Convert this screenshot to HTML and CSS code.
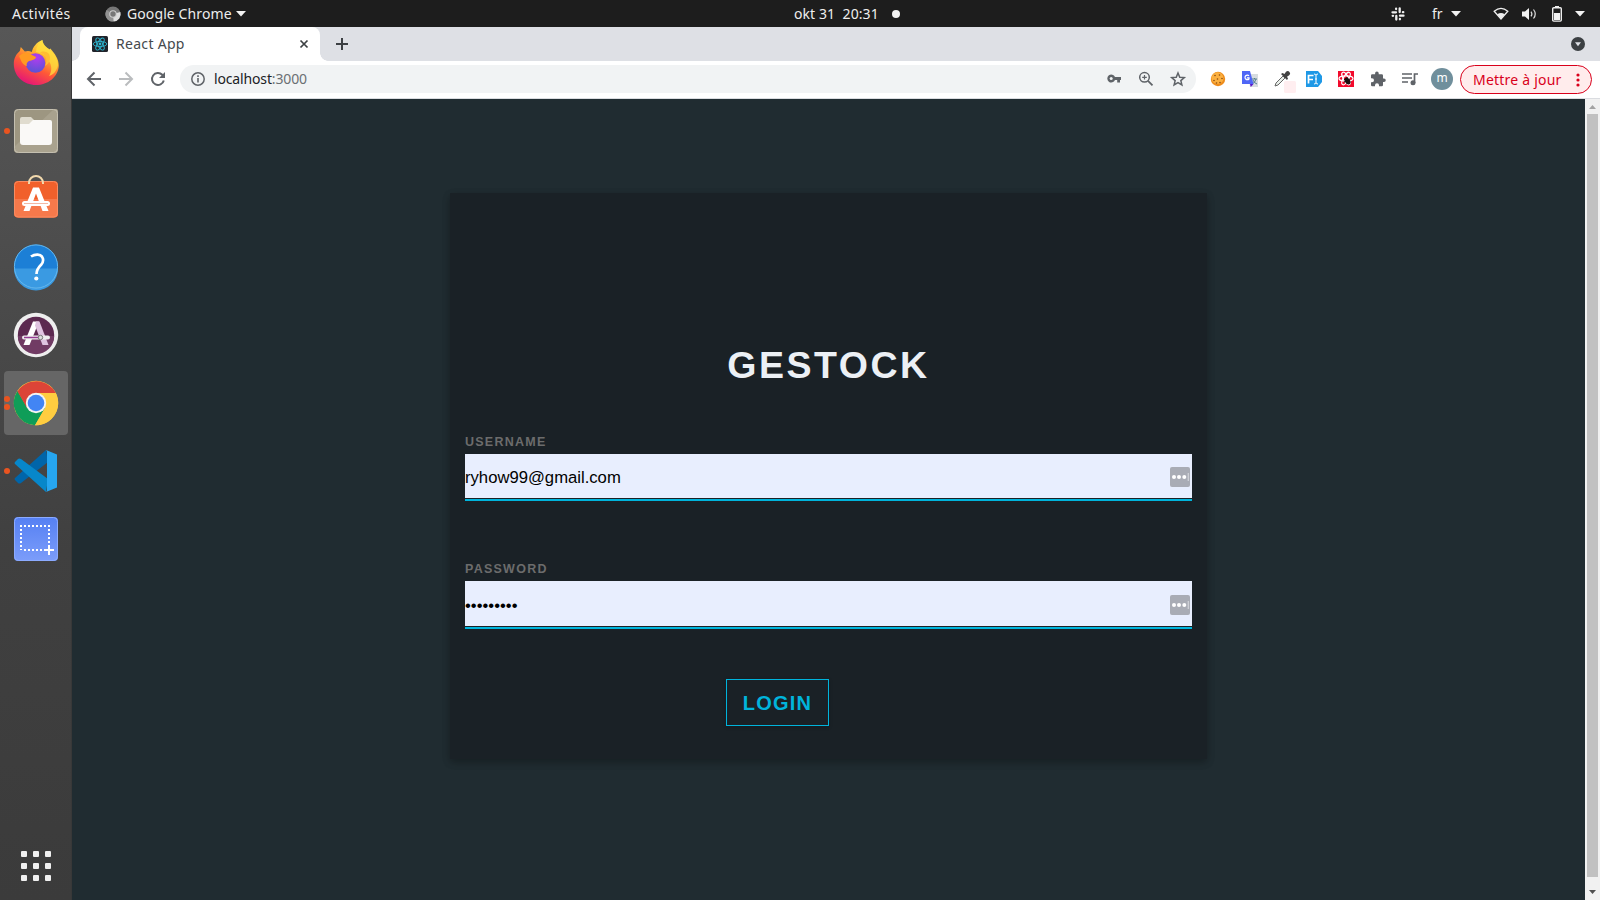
FILE: index.html
```html
<!DOCTYPE html>
<html lang="fr">
<head>
<meta charset="utf-8">
<title>React App</title>
<link rel="stylesheet" href="styles.css">
</head>
<body>
<div class="desktop">
  <header class="topbar">
    <div class="top-left">
      <span class="activities">Activités</span>
      <svg class="mini-chrome" width="16" height="16" viewBox="0 0 16 16"><circle cx="8" cy="8" r="7.6" fill="#777"/><path d="M8 8 15.4 6A7.6 7.6 0 0 1 8.5 15.6z" fill="#ddd"/><path d="M8 8 1.6 4A7.6 7.6 0 0 0 8 15.6z" fill="#929292"/><circle cx="8" cy="8" r="3.8" fill="#ccc"/><circle cx="8" cy="8" r="2.7" fill="#777"/></svg>
      <span class="appname">Google Chrome</span>
      <svg width="10" height="6" viewBox="0 0 10 6"><path d="M0 0h10L5 5.5z" fill="#f2f2f2"/></svg>
    </div>
    <div class="clock"><span class="date">okt 31&nbsp; 20:31</span><i class="dot"></i></div>
    <div class="top-right">
      <svg class="t-slack" width="14" height="14" viewBox="0 0 14 14" stroke="#eee" stroke-width="2.300" stroke-linecap="round" fill="none"><path d="M1.500 5.300H5M5.100 1.700v.4M8.700 1.500V5M12.300 5.200h-.4M9 8.700h3.500M8.900 12.300v-.4M5.300 9v3.500M1.700 8.800h.4"/></svg>
      <span class="lang">fr</span>
      <svg class="t-arr" width="10" height="6" viewBox="0 0 10 6"><path d="M0 0h10L5 5.5z" fill="#f2f2f2"/></svg>
      <svg class="t-wifi" width="16" height="14" viewBox="0 0 16 14"><path d="M1.200 4.300Q8-1.400 14.800 4.300L8 12z" fill="none" stroke="#eee" stroke-width="1.300"/><path d="M4.300 7.200Q8 5 11.700 7.200L8 12z" fill="#eee"/></svg>
      <svg class="t-vol" width="15" height="14" viewBox="0 0 15 14"><path d="M0 4.400h3L7 1v12L3 9.600H0z" fill="#f2f2f2"/><path d="M9 4.600q1.800 2.400 0 4.800M11.500 2.500q3.500 4.500 0 9" fill="none" stroke="#ddd" stroke-width="1.200"/></svg>
      <svg class="t-bat" width="10" height="16" viewBox="0 0 10 16"><path d="M3 0h4v2H3z" fill="#eee"/><rect x=".7" y="1.700" width="8.600" height="13.400" rx="1" fill="none" stroke="#eee" stroke-width="1.400"/><path d="M2 7h6v7H2z" fill="#f2f2f2"/></svg>
      <svg class="t-arr2" width="10" height="6" viewBox="0 0 10 6"><path d="M0 0h10L5 5.500z" fill="#f2f2f2"/></svg>
    </div>
  </header>

  <div class="workspace">
    <nav class="dock">
      <div class="slot">
        <svg width="48" height="48" viewBox="0 0 48 48">
          <defs><linearGradient id="ff" x1=".8" y1="0" x2=".3" y2="1"><stop offset="0" stop-color="#fff44f"/><stop offset=".35" stop-color="#ffb02e"/><stop offset=".62" stop-color="#ff5a36"/><stop offset="1" stop-color="#e3127a"/></linearGradient><radialGradient id="fp" cx=".55" cy=".2" r=".8"><stop offset="0" stop-color="#b53bf0"/><stop offset="1" stop-color="#5b53d4"/></radialGradient></defs>
          <path d="M24 46C11.500 46 1.800 37 1.800 25c0-6 2.500-10 6-13l1-4 4 4.500c3-1 5-.5 7 .5 1-5 5-10 10.500-12 .5 5 4 7 7 9.500l1-1C43 15 46.800 20 46.800 27 46 38 36 46 24 46z" fill="url(#ff)"/>
          <path d="M30.500 1c.5 5 4 7 7 9.500C43 15 46 20 46 26c-1 6-5 10-9 11 3-5 3-10 0-15-2-5-7-8-13-9 .500-5 2.500-9.500 6.500-12z" fill="#ffdf3f" opacity=".75"/>
          <circle cx="23.500" cy="24" r="9.800" fill="url(#fp)"/>
          <path d="M7 17c5-4 9-4 13-1l4 2c-.5 3-4 3-7 4-2 1-3 3-2 5-5-1-6-6-8-10z" fill="#ff9a22"/>
          <path d="M28 14c6 1 8 7 5 13 5-3 6-8 4-12-3-3-7-3-9-1z" fill="#ffbd32"/>
        </svg>
      </div>
      <div class="slot"><i class="run"></i>
        <svg width="48" height="48" viewBox="0 0 48 48"><rect x="2" y="2" width="44" height="44" rx="4" fill="#9d9681"/><path d="M2 40 42 2h2q2 0 2 3v37q0 4-4 4H6q-4 0-4-4z" fill="#a9a28e"/><rect x="2.500" y="2.500" width="43" height="43" rx="4" fill="none" stroke="#c4bfb0"/><path d="M8 20v-8q0-2 2-2h9l3 3v7z" fill="#e0dccf"/><path d="M8 17h9l4-4h17q2 0 2 2v20q0 3-3 3H11q-3 0-3-3z" fill="#faf9f7"/></svg>
      </div>
      <div class="slot">
        <svg width="48" height="48" viewBox="0 0 48 48"><rect x="2" y="6" width="44" height="36.500" rx="4" fill="#f1602b"/><path d="M2 24h44v14.500q0 4-4 4H6q-4 0-4-4z" fill="#f6794b"/><rect x="2.500" y="6.500" width="43" height="35.500" rx="4" fill="none" stroke="#f88c62"/><path d="M17 9V8a7 7 0 0 1 14 0v1" fill="none" stroke="#f2d9ad" stroke-width="2"/><path d="M11.500 36 21 12.500h6L36.500 36h-6L24 18.500 17.500 36z" fill="#fff"/><rect x="10" y="26" width="28" height="5" rx="2.500" fill="#fff"/><path d="M12 28.500h24" stroke="#f3b8a3"/></svg>
      </div>
      <div class="slot">
        <svg width="48" height="48" viewBox="0 0 48 48"><circle cx="24" cy="23.500" r="22" fill="#1c7fd6"/><path d="M2 25.500h44a22 22 0 0 1-44 0z" fill="#3a9ae2"/><circle cx="24" cy="23.500" r="21.600" fill="none" stroke="#65b7ec" stroke-width="1"/><path d="M19 13.500q3-2 6.500-1.900c6 .4 7 6.400 3.600 10.200-3.200 3.200-4.600 5-4.600 9.200" fill="none" stroke="#fff" stroke-width="2.700"/><circle cx="24.300" cy="35.500" r="2.100" fill="#fff"/></svg>
      </div>
      <div class="slot">
        <svg width="48" height="48" viewBox="0 0 48 48"><circle cx="24" cy="24" r="22.200" fill="#eee"/><circle cx="24" cy="24" r="18.200" fill="#5c2950"/><path d="M5.800 25h36.400a18.200 18.200 0 0 1-36.400 0z" fill="#713b64"/><path d="M11.500 34 21 10.500h6L17.500 34z" fill="#fff"/><path d="M23 14.500 24 10.500h3.500L36.500 34h-6z" fill="#dfc3e0"/><rect x="10" y="24.500" width="28" height="4" rx="2" fill="#eee"/><path d="M12 26.500h15" stroke="#963b93" stroke-width="1.500"/><circle cx="28.500" cy="26.500" r="2.200" fill="#ddd" stroke="#777"/></svg>
      </div>
      <div class="slot active"><i class="run r1"></i><i class="run r2"></i>
        <svg width="48" height="48" viewBox="0 0 48 48"><circle cx="24" cy="24" r="22.200" fill="#ffcd40"/><path d="M5.500 11.800A22.200 22.200 0 0 0 23 46.200L33 29 15.500 29z" fill="#0f9d58"/><path d="M5.500 12.500A22.200 22.200 0 0 1 43.800 14H24L15 29z" fill="#dc4437"/><path d="M24 14h19.800A22.200 22.200 0 0 1 23 46.200L33 29z" fill="#ffcd40"/><circle cx="24" cy="24" r="10.200" fill="#f4f4f4"/><circle cx="24" cy="24" r="8.300" fill="#4285f4"/></svg>
      </div>
      <div class="slot"><i class="run"></i>
        <svg width="48" height="48" viewBox="0 0 48 48"><path d="M34 3 3 31q-1 1 0 2l3 3q1 1 3 0L36 15z" fill="#0065a9"/><path d="M3 17q-1-1 0-2l3-3q1-1 3 0l27 20-2 13z" fill="#0787ca"/><path d="m34 3 11 4.500v33L34 45q1-1 1-2V5q0-1-1-2z" fill="#26a6f0"/></svg>
      </div>
      <div class="slot">
        <svg width="48" height="48" viewBox="0 0 48 48"><defs><linearGradient id="sc" x2="0" y2="1"><stop stop-color="#5580f3"/><stop offset="1" stop-color="#7c9dfa"/></linearGradient></defs><rect x="2" y="2" width="44" height="44" rx="4" fill="url(#sc)"/><rect x="2.500" y="2.500" width="43" height="43" rx="4" fill="none" stroke="#8cabff"/><path d="M8 11h30M37 14v18M9 14v21M12 35h20" fill="none" stroke="#fff" stroke-width="2" stroke-dasharray="2 2"/><path d="M37 30v10M32 35h10" stroke="#fff" stroke-width="2"/></svg>
      </div>
      <div class="appgrid"><i></i><i></i><i></i><i></i><i></i><i></i><i></i><i></i><i></i></div>
    </nav>

    <section class="browser">
      <div class="tabstrip">
        <div class="tab">
          <svg width="16" height="16" viewBox="0 0 16 16"><rect width="16" height="16" rx="1.500" fill="#20232a"/><g fill="none" stroke="#2db5d0" stroke-width=".9"><ellipse cx="8" cy="8" rx="6.800" ry="2.600"/><ellipse cx="8" cy="8" rx="6.800" ry="2.600" transform="rotate(60 8 8)"/><ellipse cx="8" cy="8" rx="6.800" ry="2.600" transform="rotate(120 8 8)"/></g><circle cx="8" cy="8" r="1.400" fill="#2db5d0"/></svg>
          <span class="tabtitle">React App</span>
          <svg class="close" width="8" height="8" viewBox="0 0 8 8"><path d="m.5.5 7 7m0-7-7 7" stroke="#3c4043" stroke-width="1.700"/></svg>
        </div>
        <svg class="plus" width="12" height="12" viewBox="0 0 12 12"><path d="M6 0v12M0 6h12" stroke="#3c4043" stroke-width="2"/></svg>
        <svg class="tabsearch" width="14" height="14" viewBox="0 0 14 14"><circle cx="7" cy="7" r="7" fill="#3c4043"/><path d="M4 5.300h6L7 9.300z" fill="#dee0e5"/></svg>
      </div>
      <div class="toolbar">
        <div class="nav">
          <svg viewBox="0 0 16 16"><path d="M15 8H2M8.500 1.500 2 8l6.500 6.500" fill="none" stroke="#5f6368" stroke-width="2"/></svg>
          <svg viewBox="0 0 16 16"><path d="M1 8h13M7.500 1.500 14 8l-6.500 6.500" fill="none" stroke="#babcbe" stroke-width="2"/></svg>
          <svg viewBox="0 0 16 16"><path d="M13.800 9.500A6 6 0 1 1 12.300 3.800l1.200 1.500" fill="none" stroke="#5f6368" stroke-width="2"/><path d="M15 1v6H9z" fill="#5f6368"/></svg>
        </div>
        <div class="omnibox">
          <svg width="14" height="14" viewBox="0 0 14 14"><circle cx="7" cy="7" r="6.200" fill="none" stroke="#5f6368" stroke-width="1.500"/><path d="M7 6v4.500M7 3.300v1.600" stroke="#5f6368" stroke-width="1.600"/></svg>
          <span class="url">localhost<span>:3000</span></span>
          <div class="omni-icons">
            <svg viewBox="0 0 16 16"><path d="M9 6A4 4 0 1 0 9 9h2.200v2.600h2.800V9h1V6z" fill="#5f6368"/><circle cx="5.200" cy="7.500" r="1.500" fill="#f1f3f4"/></svg>
            <svg viewBox="0 0 16 16"><circle cx="6.500" cy="6.300" r="4.800" fill="none" stroke="#5f6368" stroke-width="1.500"/><path d="m10 9.800 4.500 4.500" stroke="#5f6368" stroke-width="1.800"/><path d="M4.200 6.300h4.600M6.500 4v4.600" stroke="#5f6368" stroke-width="1.200"/></svg>
            <svg viewBox="0 0 16 16"><path d="m8 2 1.750 4.200 4.550.4-3.450 3 1.050 4.400L8 11.650 4.100 14l1.050-4.400-3.450-3 4.550-.4z" fill="none" stroke="#5f6368" stroke-width="1.500"/></svg>
          </div>
        </div>
        <div class="extensions">
          <svg viewBox="0 0 16 16"><circle cx="8" cy="8" r="7.200" fill="#ee8c1c"/><circle cx="7.500" cy="7.200" r="5.900" fill="#fbb040"/><g fill="#8a4a13"><circle cx="5" cy="4.500" r=".8"/><circle cx="9.500" cy="4" r=".8"/><circle cx="12" cy="7.500" r=".8"/><circle cx="7.500" cy="8" r=".8"/><circle cx="4" cy="9.500" r=".8"/><circle cx="10" cy="11.500" r=".8"/><circle cx="6.500" cy="12" r=".8"/></g></svg>
          <svg viewBox="0 0 16 16"><path d="M6 3h10v13H8z" fill="#d7dce0"/><path d="M10 8h5M12.500 7v1M14 8q-1 4-4 5M11 9q1 3 4 4" stroke="#56808e" fill="none"/><path d="M0 0h8l3.500 13H0z" fill="#4f66f6"/><path d="m8 13 .8 3 2.700-3z" fill="#5a18c8"/><path d="M7 4.800A2.300 2.300 0 1 0 7 8V6.800H5" stroke="#fff" fill="none" stroke-width="1.200"/></svg>
          <svg viewBox="0 0 16 16"><rect x="10" y="10" width="12" height="12" rx="1.500" fill="#ffeef0"/><path d="m1 15 1-3 7-7 2 2-7 7z" fill="#e8eee9" stroke="#666" stroke-width="1"/><path d="m7 3 1.500-1 2 1L12 .8q2-1.500 3.500.2t-.3 3.200L13 5.700l1 1.800L13 9z" fill="#424242"/></svg>
          <svg viewBox="0 0 16 16"><path d="M0 0h12l4 5v6l-4 5H0z" fill="#1e98e6"/><path d="M2.500 12.500v-8h5M2.500 8.500H7" stroke="#fff" stroke-width="1.700" fill="none"/><path d="M8 3q2 0 2 1.500v7Q10 13 8 13M12 3q-2 0-2 1.500M12 13q-2 0-2-1.500M9 8h2" stroke="#fff" stroke-width="1" fill="none"/></svg>
          <svg viewBox="0 0 16 16"><path d="M0 0h16v16H0z" fill="#f20a2c"/><g fill="none" stroke="#fff" stroke-width="1.200"><ellipse cx="8" cy="7.500" rx="7" ry="2.600"/><ellipse cx="8" cy="7.500" rx="7" ry="2.600" transform="rotate(60 8 7.500)"/><ellipse cx="8" cy="7.500" rx="7" ry="2.600" transform="rotate(120 8 7.500)"/></g><ellipse cx="9.500" cy="10" rx="2.500" ry="3.800" transform="rotate(-35 9.500 10)" fill="#1b1111"/><path d="m6 8 6 5m-6-2 6-3m-3-2v7" stroke="#1b1111"/></svg>
          <svg viewBox="0 0 16 16"><path d="M14 7.500h-1V4.500q0-1.300-1.300-1.300H8.700V2.200a1.800 1.800 0 0 0-3.600 0v1H2.300Q1 3.200 1 4.500v2.700h1a2 2 0 0 1 0 4H1v2.700q0 1.300 1.300 1.300H5v-1a2 2 0 0 1 4 0v1h2.700q1.300 0 1.300-1.300V11h1a1.750 1.750 0 0 0 0-3.500z" fill="#5f6368"/></svg>
          <svg viewBox="0 0 16 16"><path d="M0 3h10M0 7h10M0 11h6M12.500 12V3H16" stroke="#5f6368" stroke-width="1.700" fill="none"/><circle cx="11" cy="11.800" r="2.500" fill="#5f6368"/></svg>
          <span class="avatar">m</span>
        </div>
        <div class="update"><span>Mettre à jour</span><svg width="4" height="14" viewBox="0 0 4 14" fill="#d9001b"><circle cx="2" cy="2" r="1.600"/><circle cx="2" cy="7" r="1.600"/><circle cx="2" cy="12" r="1.600"/></svg></div>
      </div>

      <div class="viewport">
        <main class="page">
          <form class="card">
            <h1>GESTOCK</h1>
            <label for="user">USERNAME</label>
            <div class="field"><input id="user" type="text" value="ryhow99@gmail.com"><svg width="20" height="20" viewBox="0 0 20 20"><rect width="20" height="20" rx="2" fill="#a9acb5"/><g fill="#fff"><circle cx="4" cy="10" r="2"/><circle cx="9" cy="10" r="2"/><circle cx="14.300" cy="10" r="2"/></g><path d="M18.300 6v8" stroke="#d0d2d8" stroke-width="1.300"/></svg></div>
            <label for="pass" class="second">PASSWORD</label>
            <div class="field tall"><input id="pass" type="password" value="motdepass"><svg width="20" height="20" viewBox="0 0 20 20"><rect width="20" height="20" rx="2" fill="#a9acb5"/><g fill="#fff"><circle cx="4" cy="10" r="2"/><circle cx="9" cy="10" r="2"/><circle cx="14.300" cy="10" r="2"/></g><path d="M18.300 6v8" stroke="#d0d2d8" stroke-width="1.300"/></svg></div>
            <button type="button">LOGIN</button>
          </form>
        </main>
        <div class="scrollbar">
          <svg width="7" height="4" viewBox="0 0 7 4"><path d="M0 4h7L3.500 0z" fill="#a3a3a3"/></svg>
          <div class="thumb"></div>
          <svg width="7" height="4" viewBox="0 0 7 4"><path d="M0 0h7L3.500 4z" fill="#505050"/></svg>
        </div>
      </div>
    </section>
  </div>
</div>
</body>
</html>
```
FILE: styles.css
```css
* { box-sizing: border-box; }
body { margin: 0; font-family: "Noto Sans", "Open Sans", sans-serif; }
svg { display: block; flex: none; overflow: visible; }
.desktop { width: 1600px; height: 900px; display: flex; flex-direction: column; overflow: hidden; }

.topbar { height: 27px; flex: none; background: #1d1d1d; color: #eee; font-size: 14px; line-height: 26px; display: flex; justify-content: space-between; white-space: nowrap; }
.top-left, .clock, .top-right { display: flex; align-items: center; }
.top-left { width: 794px; padding-left: 12px; }
.activities { width: 93px; letter-spacing: .45px; }
.mini-chrome { margin-right: 6px; }
.appname { width: 109px; letter-spacing: .1px; }
.clock { width: 400px; }
.date { width: 98px; letter-spacing: .08px; }
.dot { width: 8px; height: 8px; border-radius: 50%; background: #f2f2f2; }
.top-right { width: 406px; padding-left: 197px; }
.lang { margin-left: 27px; width: 19px; }
.t-wifi { margin-left: 32px; }
.t-vol { margin-left: 13px; }
.t-bat { margin-left: 15px; }
.t-arr2 { margin-left: 13px; }

.workspace { flex: 1; display: flex; min-height: 0; }
.dock { width: 72px; flex: none; padding-top: 2px; background: linear-gradient(#575757, #4a4a4a 32%, #404040 60%, #3b3b3b); border-right: 1px solid #383838; display: flex; flex-direction: column; align-items: center; }
.slot { position: relative; width: 64px; height: 64px; margin: 2px 0; flex: none; border-radius: 4px; display: flex; align-items: center; justify-content: center; }
.active { background: #666; }
.run { position: absolute; left: 0; top: 29px; width: 6px; height: 6px; border-radius: 50%; background: #e95420; }
.r1 { top: 25px; }
.r2 { top: 33px; }
.appgrid { margin: auto 0 19px; display: grid; grid-template-columns: repeat(3, 6px); gap: 6px; }
.appgrid i { width: 6px; height: 6px; border-radius: 1px; background: #f0f0f0; }

.browser { flex: 1; display: flex; flex-direction: column; min-width: 0; }
.tabstrip { height: 34px; flex: none; background: #dee0e5; display: flex; align-items: center; padding: 0 15px 0 8px; }
.tab { position: relative; width: 240px; height: 34px; background: #fff; border-radius: 8px 8px 0 0; display: flex; align-items: center; padding: 0 12px; color: #45494d; }
.tab::before, .tab::after { content: ""; position: absolute; bottom: 0; width: 8px; height: 8px; }
.tab::before { left: -8px; background: radial-gradient(circle at 0 0, transparent 7.5px, #fff 8px); }
.tab::after { right: -8px; background: radial-gradient(circle at 100% 0, transparent 7.5px, #fff 8px); }
.tabtitle { font-size: 14px; margin-left: 8px; padding-bottom: 2px; letter-spacing: .3px; }
.close { margin-left: auto; }
.plus { margin-left: 16px; }
.tabsearch { margin-left: auto; }
.toolbar { height: 38px; flex: none; background: #fff; border-bottom: 1px solid #dadce0; display: flex; align-items: flex-start; padding: 4px 8px 0 14px; }
.nav { display: flex; gap: 16px; height: 28px; align-items: center; width: 94px; }
.nav svg { width: 16px; height: 16px; }
.omnibox { width: 1016px; height: 28px; border-radius: 14px; background: #f1f3f4; display: flex; align-items: center; padding: 0 10px 0 11px; }
.url { margin-left: 9px; padding-bottom: 2px; font-size: 14px; color: #202124; letter-spacing: -.15px; }
.url span { color: #6b6f73; }
.omni-icons { margin-left: auto; display: flex; gap: 16px; }
.omni-icons svg, .extensions svg { width: 16px; height: 16px; }
.extensions { height: 28px; margin-left: 14px; display: flex; align-items: center; gap: 16px; }
.avatar { width: 22px; height: 22px; margin-left: -3px; border-radius: 50%; background: #708f9c; color: #fff; font-size: 12px; line-height: 20px; text-align: center; }
.update { width: 132px; height: 29px; margin-left: auto; border: 1px solid #d9001b; border-radius: 15px; background: #ffecec; color: #d9001b; display: flex; align-items: center; justify-content: space-between; padding: 0 11px 0 12px; font-size: 14px; letter-spacing: .22px; white-space: nowrap; }

.viewport { flex: 1; display: flex; min-height: 0; }
.page { flex: 1; background: #202c31; display: flex; justify-content: center; align-items: flex-start; padding-top: 94px; font-family: "Liberation Sans", Arial, sans-serif; }
.card { width: 757px; height: 566px; background: #1a2126; box-shadow: 0 3px 8px rgba(0,0,0,.14), 0 3px 8px rgba(0,0,0,.18); padding: 149px 15px 0; display: flex; flex-direction: column; }
h1 { margin: 0; text-align: center; font-size: 37.5px; line-height: 46px; letter-spacing: 2.5px; color: #ecf0f5; font-weight: bold; }
label { margin-top: 47px; height: 19px; font-size: 12.5px; line-height: 15px; letter-spacing: 1.25px; font-weight: bold; color: #6c6c6c; }
.second { margin-top: 61px; }
.field { display: flex; align-items: center; height: 47px; background: #e8eefe; border-bottom: 2px solid #00b4dc; box-shadow: inset 0 -1px #1a2126; padding: 1px 2px 0 0; }
.tall { height: 48px; padding-top: 2px; }
.field input { flex: 1; height: 44px; border: 0; outline: 0; padding: 1px 0 0; background: transparent; color: #000; font: 16.667px "Liberation Sans", Arial, sans-serif; }
button { margin: 50px 0 0 261px; width: 103px; height: 47px; padding: 2px 0 0; border: 1px solid #00b4dc; background: transparent; color: #00b4dc; font: bold 20px "Liberation Sans", Arial, sans-serif; letter-spacing: 1.25px; box-shadow: 0 1px 4px rgba(0,0,0,.2); }

.scrollbar { width: 15px; flex: none; background: #f1f1f1; display: flex; flex-direction: column; align-items: center; padding: 6px 0 6px; }
.thumb { width: 11px; height: 763px; margin: 5px 0 auto; background: #c1c1c1; }
```
